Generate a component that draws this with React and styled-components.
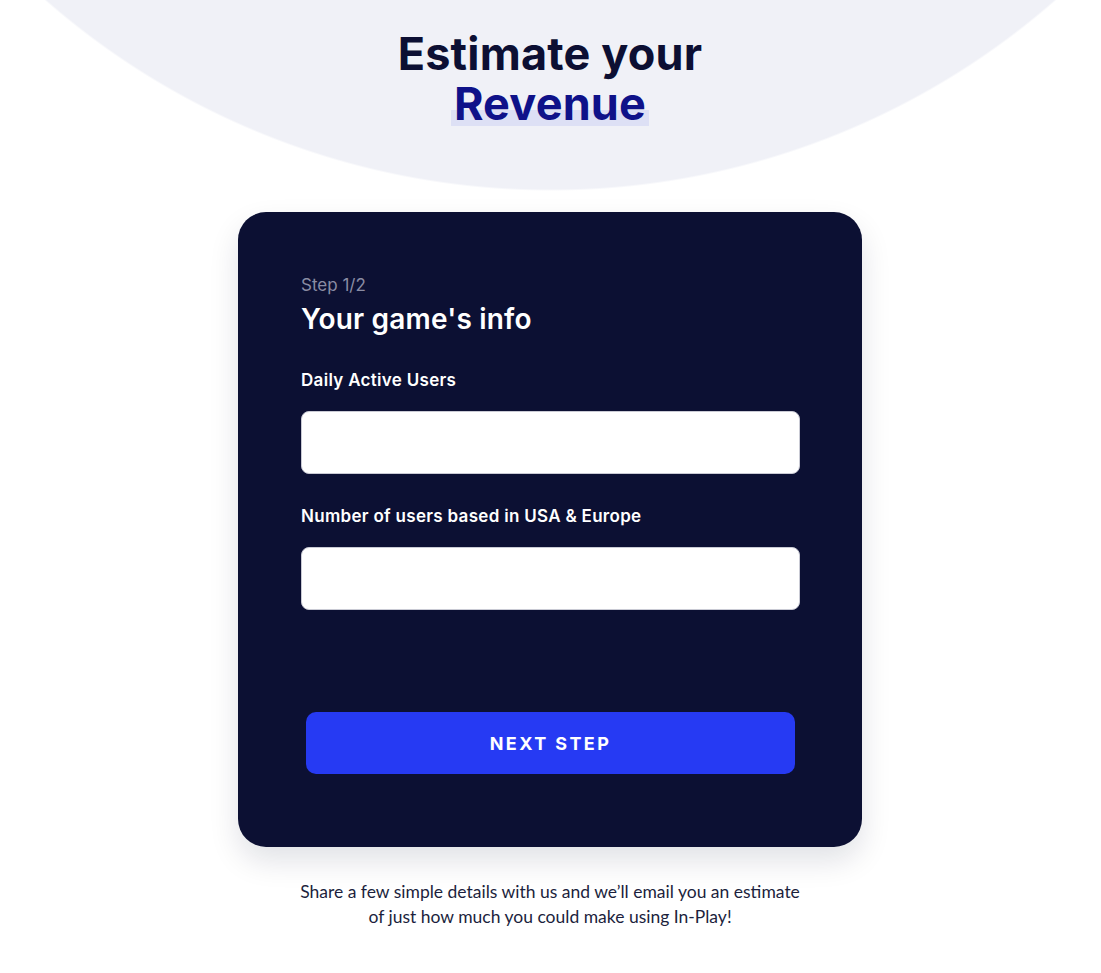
import styled, { createGlobalStyle } from 'styled-components';

const GlobalStyle = createGlobalStyle`
  html, body {
    margin: 0;
    padding: 0;
    background: #ffffff;
  }
  body {
    font-family: 'Lato', 'Noto Sans', sans-serif;
  }
  * {
    box-sizing: border-box;
  }
`;

const Page = styled.div`
  width: 100%;
  min-height: 973px;
  display: flex;
  flex-direction: column;
  align-items: center;
  background: radial-gradient(circle 766px at 50% -576px, #f0f1f7 765px, transparent 767px) no-repeat;
  padding: 29px 1px 0 0;
`;

const Title = styled.h1`
  margin: 0;
  font-family: 'Inter', 'Noto Sans', sans-serif;
  font-weight: 700;
  font-size: 45px;
  line-height: 50px;
  letter-spacing: 0.2px;
  text-align: center;
  color: #0c0f33;
`;

const Highlight = styled.span`
  color: #0f1289;
  background: linear-gradient(to bottom, transparent 62%, #dde0f5 62%, #dde0f5 90%, transparent 90%);
  padding: 0 3px;
`;

const Card = styled.form`
  margin-top: 83px;
  width: 624px;
  height: 635px;
  background: #0c1033;
  border-radius: 28px;
  box-shadow: 0 14px 30px rgba(12, 16, 51, 0.12);
  padding: 63px 62px 0 63px;
  display: flex;
  flex-direction: column;
`;

const Step = styled.div`
  font-family: 'Inter', 'Noto Sans', sans-serif;
  font-size: 17px;
  line-height: 20px;
  color: #8a8ca3;
`;

const Heading = styled.h2`
  margin: 7px 0 0;
  font-family: 'Inter', 'Noto Sans', sans-serif;
  font-weight: 600;
  font-size: 28px;
  line-height: 34px;
  letter-spacing: 0.2px;
  color: #ffffff;
`;

const Field = styled.label`
  display: flex;
  flex-direction: column;
  gap: 20px;
  margin-top: ${p => p.$top}px;
`;

const Label = styled.span`
  font-family: 'Inter', 'Noto Sans', sans-serif;
  font-weight: 600;
  font-size: 17px;
  line-height: 22px;
  letter-spacing: 0.3px;
  color: #ffffff;
`;

const Input = styled.input`
  width: 100%;
  height: 63px;
  border-radius: 8px;
  border: 1px solid #c9cad4;
  background: #ffffff;
  outline: none;
  padding: 0 16px;
  font-size: 17px;
`;

const Button = styled.button`
  margin: 102px 5px 0;
  height: 62px;
  border: none;
  border-radius: 10px;
  background: #263af3;
  color: #ffffff;
  font-family: 'Inter', 'Noto Sans', sans-serif;
  font-weight: 700;
  font-size: 18px;
  letter-spacing: 2.4px;
  cursor: pointer;
`;

const Note = styled.p`
  margin: 32px 0 0;
  width: 520px;
  text-align: center;
  font-family: 'Lato', 'Noto Sans', sans-serif;
  font-size: 17.5px;
  line-height: 25px;
  color: #1c1f3d;
`;

export default function App() {
  return (
    <>
      <GlobalStyle />
      <Page>
        <Title>
          Estimate your
          <br />
          <Highlight>Revenue</Highlight>
        </Title>
        <Card onSubmit={(e) => e.preventDefault()}>
          <Step>Step 1/2</Step>
          <Heading>Your game's info</Heading>
          <Field $top={33}>
            <Label>Daily Active Users</Label>
            <Input type="text" />
          </Field>
          <Field $top={31}>
            <Label>Number of users based in USA &amp; Europe</Label>
            <Input type="text" />
          </Field>
          <Button type="submit">NEXT STEP</Button>
        </Card>
        <Note>
          Share a few simple details with us and we’ll email you an estimate of just how much you could make using In-Play!
        </Note>
      </Page>
    </>
  );
}
